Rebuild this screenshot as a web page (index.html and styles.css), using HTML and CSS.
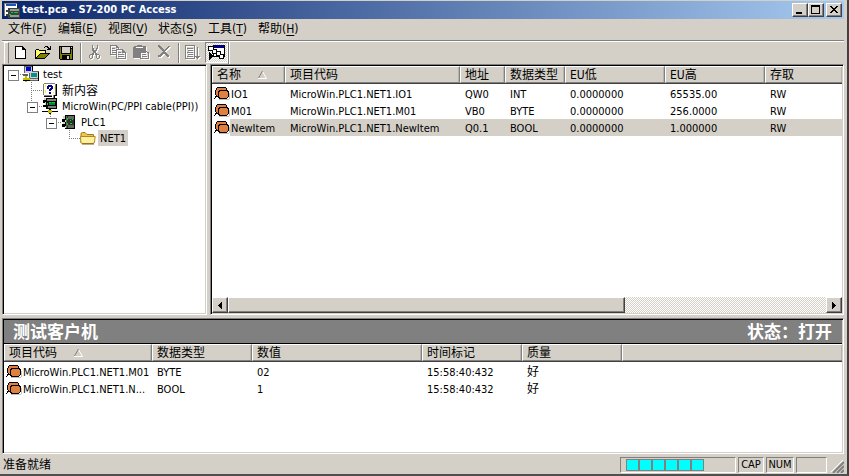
FILE: index.html
```html
<!DOCTYPE html>
<html lang="zh-CN">
<head>
<meta charset="utf-8">
<title>test.pca - S7-200 PC Access</title>
<link rel="stylesheet" href="styles.css">
</head>
<body>
<svg class="defs" aria-hidden="true">
  <symbol id="tag" viewBox="0 0 16 13">
    <path fill="#c0c0c0" d="M5 12h10v1H5zM15 6h1v6h-1z"/>
    <path fill="#000" d="M3 0h9v1h1v2h1v1h1v6h-1v1h-1v1H5v-1H4v-1H2v1H1v1H0v-1h1V9h1V8H1V3h1V1h1z"/>
    <path fill="#e08040" d="M3 1h9v2H5v1H4v5H3V8H2V3h1zM6 4h7v1h1v5h-1v1H6v-1H5V5h1z"/>
  </symbol>
  <symbol id="sort" viewBox="0 0 9 8">
    <path fill="none" stroke="#fff" d="M4.500 0.500L8.500 7.500H0"/>
    <path fill="none" stroke="#808080" d="M4.500 0L0.500 7"/>
  </symbol>
  <symbol id="plc" viewBox="0 0 13 14">
    <path fill="#000" d="M3 0h10v14H3zM0 4h4v3H0zM0 9h4v3H0z"/>
    <path fill="#606860" d="M4 1h8v12H4z"/>
    <path fill="#303030" d="M6 4h6v6H6zM5 1h1v12H5z"/>
    <path fill="#d0d0d0" d="M1 1h2v3H1zM3 5h1v2H3zM1 7h2v2H1zM3 11h1v2H3z"/>
    <path fill="#00e000" d="M5 3h1v2H5zM8 5h1v1H8zM10 4h1v1h-1zM8 8h2v1H8zM5 8h1v2H5z"/>
  </symbol>
</svg>

<div class="window">
  <header class="titlebar">
    <svg class="appicon" viewBox="0 0 16 15"><path fill="#fff" d="M1 1h12v12H1z"/><path fill="#808080" d="M0 0h13v1H1v12H0z"/><path fill="#2050c0" d="M2 1h10v2H2z"/><path fill="#404040" d="M4 5h12v10H4zM2 7h3v2H2zM2 11h3v2H2z"/><path fill="#90a090" d="M6 6h9v2H6zM6 12h9v2H6z"/><path fill="#00d040" d="M7 9h2v1H7zM10 9h4v1h-4zM5 11h2v1H5z"/></svg>
    <h1>test.pca - S7-200 PC Access</h1>
    <div class="caption">
      <button aria-label="最小化"><svg viewBox="0 0 12 10"><path d="M2 7h6v2H2z"/></svg></button>
      <button aria-label="最大化"><svg viewBox="0 0 12 10"><path fill-rule="evenodd" d="M1 0h9v9H1zM2 2v6h7V2z"/></svg></button>
      <button class="close" aria-label="关闭"><svg viewBox="0 0 12 10"><path d="M2 1h2v1h1v1h2V2h1V1h2v1H9v1H8v1H7v1h1v1h1v1h1v1H8V7H7V6H5v1H4v1H2V7h1V6h1V5h1V4H4V3H3V2H2z"/></svg></button>
    </div>
  </header>

  <nav class="menu">
    <button>文件(<u>F</u>)</button>
    <button>编辑(<u>E</u>)</button>
    <button>视图(<u>V</u>)</button>
    <button>状态(<u>S</u>)</button>
    <button>工具(<u>T</u>)</button>
    <button>帮助(<u>H</u>)</button>
  </nav>

  <div class="toolbar">
    <button aria-label="新建"><svg viewBox="0 0 18 16"><path d="M4 2h8v1h1v1h1v1h1v10H4z"/><path fill="#fff" d="M5 3h6v3h3v8H5z"/></svg></button>
    <button aria-label="打开"><svg viewBox="0 0 18 16"><path d="M1 6h1V5h3v1h7v3h4v1h-1v1h-1v1h-1v1h-1v1h-1v1H1zM10 3h1V2h3v1h1v1h1V2h1v4h-4V5h1V4h-1V3h-2v1h-1z"/><path fill="#ffff60" d="M2 6h3v1h6v2H6v1H5v1H4v1H3v1H2z"/><path fill="#808000" d="M6 10h8v1h-1v1h-1v1h-1v1H3v-1h1v-1h1v-1h1z"/></svg></button>
    <button aria-label="保存"><svg viewBox="0 0 18 16"><path d="M2 2h14v14H3v-1H2z"/><path fill="#808000" d="M3 3h1v7h10V5h1v10h-2v-4H5v4H3z"/><path fill="#d4d0c8" d="M5 3h8v6H5zM14 3h1v1h-1zM10 12h2v3h-2z"/></svg></button>
    <i class="sep"></i>
    <button aria-label="剪切"><svg class="off" viewBox="0 0 18 16"><path fill-rule="evenodd" d="M6 1h1v3h1v2h2V4h1V1h1v4h-1v2h-1v2h1v1h2v1h1v3h-1v1h-2v-1h-1v-3H9V9H8v2H7v3H6v1H4v-1H3v-3h1v-1h2V9h1V7H6V5H6zM4 11v3h2v-3zM11 11v3h2v-3z"/></svg></button>
    <button aria-label="复制"><svg class="off" viewBox="0 0 18 16"><path fill-rule="evenodd" d="M1 1h7v1h1v1h1v2h4v1h1v1h1v1h1v7H7v-4H1zM2 2v8h5V5h2V4H7V2zM8 6v8h8V9h-3V6zM3 4h3v1H3zM3 6h4v1H3zM3 8h4v1H3zM9 8h3v1H9zM9 10h6v1H9zM9 12h6v1H9z"/></svg></button>
    <button aria-label="粘贴"><svg class="off" viewBox="0 0 18 16"><path fill-rule="evenodd" d="M2 2h3V1h5v1h4v5h1v1h2v7H8v-1H1V3h1zM4 3v1h7V3zM9 9v5h7V9h-1V8h-1v1zM10 10h4v1h-4zM10 12h5v1h-5z"/></svg></button>
    <button aria-label="删除"><svg class="off" viewBox="0 0 18 16"><path d="M3 1h2v1h1v1h1v1h1v1h1v1h1V5h1V4h1V3h1V2h2v1h-1v1h-1v1h-1v1h-1v1h-1v1h1v1h1v1h1v1h1v2h-2v-1h-1v-1h-1v-1h-1V9H9v1H8v1H7v1H6v1H3v-2h2v-1h1V9h1V8h1V7H7V6H6V5H5V4H4V3H3z"/></svg></button>
    <i class="sep"></i>
    <button aria-label="属性"><svg class="off" viewBox="0 0 18 16"><path fill-rule="evenodd" d="M1 1h10v14H1zM2 2v12h8V2zM3 4h6v1H3zM4 6h5v1H4zM3 8h6v1H3zM4 10h5v1H4zM3 12h6v1H3zM13 3h1v9h2v1h-1v1h-1v1h-1v-1h-1v-1h-1v-1h2z"/></svg></button>
    <button class="pressed" aria-label="测试客户机"><svg viewBox="0 0 18 16"><path d="M6 1h12v12H6z"/><path fill="#000080" d="M7 1h10v3H7z"/><path fill="#fff" d="M7 4h10v8H7z"/><path d="M1 2h6v5H1zM5 5h5v5H5zM9 7h5v5H9zM12 10h5v5h-5zM2 8h1v1h1v1h1v1h1v2H5v1H4v1H3v1H2z"/><path fill="#fff" d="M2 3h4v3H2zM6 6h3v3H6zM10 8h3v3h-3zM13 11h3v3h-3z"/></svg></button>
    <i class="sep end"></i>
  </div>

  <main class="workspace">
    <section class="tree panel" aria-label="项目">
      <ul>
        <li><div class="node"><button class="toggle" aria-label="折叠">−</button>
          <svg class="i16" viewBox="0 0 16 16"><path fill="#606060" d="M1 0h9v7H1zM6 5h10v10H6zM0 8h5v2H0z"/><path fill="#d4d0c8" d="M2 1h7v6H2zM7 6h8v6H7zM6 13h9v1H6z"/><path fill="#0000e0" d="M3 1h5v4H3z"/><path fill="#009090" d="M8 7h6v4H8z"/><path fill="#c0c000" d="M2 10h2v2h3v2H4v2H2v-2H0v-2h2z"/><path d="M0 14h7v1H0zM9 0h1v5H9zM15 6h1v9h-1z"/></svg><span>test</span></div>
          <ul>
            <li class="more"><div class="node"><i class="leaf"></i>
              <svg class="i16" viewBox="0 0 16 16"><path fill="#808080" d="M2 1h11v1h1v11h-2v3h-1v-1h-1v-1H2v-1H1V2h1z"/><path d="M14 2h1v12h-2v2h-1v-3h2zM2 14h8v1H2z"/><path fill="#fff" d="M2 2h11v11h-2v2h-1v-2H2z"/><path fill="#000080" d="M5 4h1V3h4v1h1v3h-1v1H9v1H7V7h1V6h1V5H7v2H5zM7 10h2v2H7z"/><path fill="#ffff00" d="M3 3h1v2H3zM12 5h1v2h-1zM3 8h1v3H3zM11 10h1v1h-1z"/></svg><span class="zh">新内容</span></div></li>
            <li><div class="node"><button class="toggle" aria-label="折叠">−</button>
              <svg class="i16 tall" viewBox="0 0 16 18"><path d="M4 1h11v11H4zM1 3h4v3H1zM1 8h4v2H1z"/><path fill="#808080" d="M5 2h9v2H5zM6 9h8v2H6z"/><path fill="#d4d0c8" d="M2 1h2v2H2zM3 5h1v3H3z"/><path fill="#008040" d="M7 5h6v3H7z"/><path fill="#00e000" d="M7 5h2v1H7zM10 5h3v1h-3zM5 6h1v2H5z"/><path d="M7 12h2v2h7v1H9v2H7v-2H0v-1h7z"/><path fill="#c0c000" d="M6 13h4v3H6z"/></svg><span>MicroWin(PC/PPI cable(PPI))</span></div>
              <ul>
                <li><div class="node"><button class="toggle" aria-label="折叠">−</button>
                  <svg class="i16"><use href="#plc" x="1" y="1" width="13" height="14"/></svg><span>PLC1</span></div>
                  <ul>
                    <li><div class="node"><i class="leaf"></i>
                      <svg class="i16 smooth" viewBox="0 0 16 16"><path fill="#e8c850" stroke="#a07818" d="M1 13V4q0-1.500 1.500-1.500H5l2 2h6.500v2"/><path fill="#fff0a0" stroke="#b08820" d="M2 13.500Q.5 13 .8 11L.5 6.500h14.700L14.500 12q-.2 1.500-1.500 1.500z"/><path fill="none" stroke="#806010" d="M2 14h12"/></svg><span class="selected">NET1</span></div></li>
                  </ul></li>
              </ul></li>
          </ul></li>
      </ul>
    </section>

    <section class="items panel" aria-label="项目列表">
      <table>
        <colgroup><col class="w73"><col class="w175"><col class="w45"><col class="w60"><col class="w100"><col class="w100"><col></colgroup>
        <thead><tr><th>名称<svg class="sort"><use href="#sort"/></svg></th><th>项目代码</th><th>地址</th><th>数据类型</th><th>EU低</th><th>EU高</th><th>存取</th></tr></thead>
        <tbody>
          <tr><td><svg class="tag"><use href="#tag"/></svg>IO1</td><td>MicroWin.PLC1.NET1.IO1</td><td>QW0</td><td>INT</td><td>0.0000000</td><td>65535.00</td><td>RW</td></tr>
          <tr><td><svg class="tag"><use href="#tag"/></svg>M01</td><td>MicroWin.PLC1.NET1.M01</td><td>VB0</td><td>BYTE</td><td>0.0000000</td><td>256.0000</td><td>RW</td></tr>
          <tr class="current"><td><svg class="tag"><use href="#tag"/></svg>NewItem</td><td>MicroWin.PLC1.NET1.NewItem</td><td>Q0.1</td><td>BOOL</td><td>0.0000000</td><td>1.000000</td><td>RW</td></tr>
        </tbody>
      </table>
      <div class="scroll">
        <button aria-label="向左"><svg viewBox="0 0 4 7"><path d="M3 0h1v7H3V6H2V5H1V4H0V3h1V2h1V1h1z"/></svg></button>
        <div class="track"><div class="thumb"></div></div>
        <button aria-label="向右"><svg viewBox="0 0 4 7"><path d="M0 0h1v1h1v1h1v1h1v1H3v1H2v1H1v1H0z"/></svg></button>
      </div>
    </section>
  </main>

  <section class="client panel">
    <div class="banner"><h2>测试客户机</h2><p>状态：打开</p></div>
    <table>
      <colgroup><col class="w148"><col class="w100"><col class="w170"><col class="w100"><col class="w100"><col></colgroup>
      <thead><tr><th>项目代码<svg class="sort"><use href="#sort"/></svg></th><th>数据类型</th><th>数值</th><th>时间标记</th><th>质量</th><th></th></tr></thead>
      <tbody>
        <tr><td><svg class="tag"><use href="#tag"/></svg>MicroWin.PLC1.NET1.M01</td><td>BYTE</td><td>02</td><td>15:58:40:432</td><td class="zh">好</td><td></td></tr>
        <tr><td><svg class="tag"><use href="#tag"/></svg>MicroWin.PLC1.NET1.N...</td><td>BOOL</td><td>1</td><td>15:58:40:432</td><td class="zh">好</td><td></td></tr>
      </tbody>
    </table>
  </section>

  <footer class="status">
    <p>准备就绪</p>
    <div class="cell progress"><i></i><i></i><i></i><i></i><i></i><i></i></div>
    <div class="cell cap">CAP</div>
    <div class="cell num">NUM</div>
    <div class="cell blank"></div>
    <svg class="grip" viewBox="0 0 13 13"><path stroke="#fff" d="M0 12L12 0M4 12L12 4M8 12L12 8"/><path stroke="#808080" stroke-width="2" d="M2 13L13 2M6 13L13 6M10 13L13 10"/></svg>
  </footer>
</div>
</body>
</html>
```
FILE: styles.css
```css
* { box-sizing: border-box; margin: 0; padding: 0; }
body {
  height: 100vh;
  overflow: hidden;
  background: #d4d0c8;
  color: #000;
  font: 11px/16px "DejaVu Sans Condensed", "Noto Sans CJK SC", sans-serif;
}
button { font: inherit; color: inherit; background: none; border: 0; }
ul { list-style: none; }
svg { display: block; flex: none; shape-rendering: crispEdges; }
.defs { position: absolute; width: 0; height: 0; }
.smooth { shape-rendering: auto; }
.zh, th, .menu, .status p { font-size: 12px; }

.window {
  display: grid;
  grid-template-rows: 18px 22px 23px 252fr 138fr 20px;
  height: 100vh;
  padding: 1px 3px 0 2px;
  border-right: 2px solid #404040;
  border-bottom: 2px solid #505050;
}

.titlebar {
  display: flex;
  align-items: center;
  padding: 0 2px 0 2px;
  background: linear-gradient(90deg, #0a246a, #a6caf0);
  color: #fff;
}
.appicon { width: 16px; height: 15px; margin-right: 2px; }
h1 { flex: 1; font-size: 11px; font-weight: bold; }
.caption { display: flex; }
.caption button, .scroll button, .thumb {
  background: #d4d0c8;
  border: 1px solid;
  border-color: #fff #404040 #404040 #fff;
  box-shadow: inset -1px -1px #808080;
}
.caption button { width: 16px; height: 14px; padding: 1px; }
.caption svg { width: 12px; height: 10px; }
.caption .close { margin-left: 2px; }

.menu {
  display: flex;
  padding-left: 1px;
  border-bottom: 1px solid #808080;
  box-shadow: 0 1px #fff;
}
.menu button { width: 50px; text-align: left; padding: 0 0 2px 5px; white-space: nowrap; font-size: 12px; }
.menu u { text-underline-offset: 2px; }

.toolbar {
  display: flex;
  padding: 1px 0 0 2px;
}
.toolbar::before {
  content: "";
  width: 3px;
  border: 1px solid;
  border-color: #fff #808080 #d4d0c8 #fff;
}
.toolbar button { width: 23px; height: 21px; padding: 2px 3px 3px 2px; }
.toolbar svg { width: 18px; height: 16px; }
.toolbar .off { fill: #808080; filter: drop-shadow(1px 1px 0 #fff); }
.sep { width: 2px; margin: 1px 2px; border-left: 1px solid #808080; border-right: 1px solid #fff; }
.sep.end { margin: 0; }
.toolbar .pressed {
  border: 1px solid;
  border-color: #808080 #fff #fff #808080;
  padding: 1px 2px 2px 1px;
  background: repeating-conic-gradient(#fff 0 25%, #d4d0c8 0 50%) 0 0 / 2px 2px;
}

.workspace {
  display: grid;
  grid-template-columns: 205px 1fr;
  gap: 3px;
  min-height: 0;
  padding-bottom: 1px;
}
.panel {
  min-width: 0;
  min-height: 0;
  overflow: hidden;
  background: #fff;
  border: 1px solid;
  border-color: #808080 #fff #fff #808080;
  box-shadow: inset 1px 1px #000, inset -1px -1px #d4d0c8;
}

.tree { padding: 1px; }
.tree ul ul { padding-left: 19px; }
.node { display: flex; height: 16px; align-items: center; white-space: nowrap; }
.node span { padding: 2px 2px 0; margin-left: 2px; line-height: 14px; }
.node .selected { background: #d4d0c8; }
.i16 { width: 16px; height: 16px; }
.i16.tall { height: 18px; }
.toggle, .leaf { position: relative; flex: none; width: 19px; height: 16px; }
.toggle { color: transparent; }
.toggle::before {
  content: "";
  position: absolute;
  left: 4px;
  top: 4px;
  z-index: 1;
  width: 9px;
  height: 9px;
  border: 1px solid #808080;
  background: linear-gradient(#000, #000) center / 5px 1px no-repeat #fff;
}
.toggle::after, .leaf::after {
  content: "";
  position: absolute;
  left: 8px;
  top: 0;
  width: 11px;
  height: 9px;
  background:
    repeating-linear-gradient(90deg, #808080 0 1px, transparent 1px 2px) 0 8px / 11px 1px no-repeat,
    repeating-linear-gradient(#808080 0 1px, transparent 1px 2px) 0 0 / 1px 9px no-repeat;
}
.more .leaf::before {
  content: "";
  position: absolute;
  left: 8px;
  top: 8px;
  width: 1px;
  height: 8px;
  background: repeating-linear-gradient(#808080 0 1px, transparent 1px 2px);
}
.tree > ul > li > .node > .toggle::after { top: 8px; height: 1px; background-position: 0 0, 0 9px; }

.items { display: flex; flex-direction: column; padding: 1px; }
table { width: 100%; table-layout: fixed; border-collapse: separate; border-spacing: 0; }
th {
  height: 17px;
  padding: 2px 0 0 4px;
  border: 1px solid;
  border-color: #fff #808080 #808080 #fff;
  box-shadow: inset -1px 0 #b8b4ac, 0 1px #404040;
  background: #d4d0c8;
  font-weight: normal;
  line-height: 13px;
  text-align: left;
  white-space: nowrap;
}
th:last-child { border-right: 0; }
td { height: 17px; padding: 2px 0 0 5px; line-height: 15px; white-space: nowrap; }
tbody tr:first-child td { height: 19px; padding-top: 4px; }
td:first-child { padding-left: 2px; }
.tag { display: inline-block; width: 16px; height: 13px; margin-right: 1px; vertical-align: -2px; }
.sort { display: inline-block; width: 9px; height: 8px; margin-left: 17px; vertical-align: 0; shape-rendering: auto; }
.current td { background: #d4d0c8; }
.current td:first-child { background: linear-gradient(90deg, #fff 18px, #d4d0c8 18px); }
.w45 { width: 45px; }
.w60 { width: 60px; }
.w73 { width: 73px; }
.w100 { width: 100px; }
.w148 { width: 148px; }
.w170 { width: 170px; }
.w175 { width: 175px; }

.scroll { display: flex; height: 16px; margin-top: auto; }
.scroll button { display: grid; place-items: center; width: 16px; }
.scroll svg { width: 4px; height: 7px; }
.track { flex: 1; background: repeating-conic-gradient(#fff 0 25%, #d4d0c8 0 50%) 0 0 / 2px 2px; }
.thumb { width: 66.4%; height: 16px; }

.client { margin-top: 2px; padding: 1px; }
.banner {
  display: flex;
  justify-content: space-between;
  align-items: center;
  height: 24px;
  padding: 0 10px 0 9px;
  border-bottom: 1px solid #000;
  background: #808080;
  color: #fff;
  line-height: 22px;
}
h2, .banner p { font-size: 17px; font-weight: bold; }

.status { display: flex; align-items: center; gap: 2px; padding: 2px 0 1px; }
.status p { flex: 1; padding-left: 1px; }
.cell { height: 16px; border: 1px solid; border-color: #808080 #fff #fff #808080; line-height: 14px; text-align: center; }
.progress { display: flex; width: 116px; padding: 1px 5px; }
.progress i { width: 13px; height: 12px; border: 1px solid #808080; background: #0ff; }
.cap { width: 26px; }
.num { width: 28px; }
.blank { width: 31px; }
.grip { width: 13px; height: 13px; margin-left: 2px; align-self: flex-end; shape-rendering: auto; }
```
